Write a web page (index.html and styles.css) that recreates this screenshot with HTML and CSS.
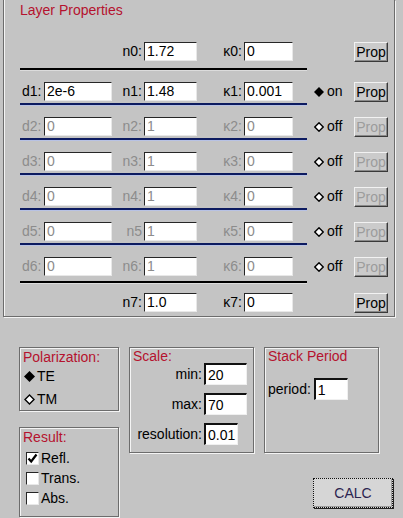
FILE: index.html
```html
<!DOCTYPE html>
<html>
<head>
<meta charset="utf-8">
<title>Layer Properties</title>
<link rel="stylesheet" href="styles.css">
</head>
<body>
<div class="frame">
  <div class="ftitle">Layer Properties</div>

  <div class="row r0">
    <span class="dlab"></span><span class="dinp"></span>
    <span class="nlab">n0:</span><input class="ninp" value="1.72">
    <span class="klab">κ0:</span><input class="kinp" value="0">
    <span class="radio"></span>
    <button class="prop">Prop</button>
  </div>
  <div class="sep black s0"></div>

  <div class="row">
    <span class="dlab">d1:</span><input class="dinp" value="2e-6">
    <span class="nlab">n1:</span><input class="ninp" value="1.48">
    <span class="klab">κ1:</span><input class="kinp" value="0.001">
    <span class="radio"><svg width="10" height="10" viewBox="0 0 10 10"><polygon points="5,0 10,5 5,10 0,5" fill="#000"/></svg>on</span>
    <button class="prop">Prop</button>
  </div>
  <div class="sep blue"></div>

  <div class="row dis">
    <span class="dlab">d2:</span><input class="dinp" value="0">
    <span class="nlab">n2:</span><input class="ninp" value="1">
    <span class="klab">κ2:</span><input class="kinp" value="0">
    <span class="radio"><svg width="10" height="10" viewBox="0 0 10 10"><polygon points="5,0.8 9.2,5 5,9.2 0.8,5" fill="#fff" stroke="#000" stroke-width="1.4"/></svg>off</span>
    <button class="prop">Prop</button>
  </div>
  <div class="sep blue"></div>

  <div class="row dis">
    <span class="dlab">d3:</span><input class="dinp" value="0">
    <span class="nlab">n3:</span><input class="ninp" value="1">
    <span class="klab">κ3:</span><input class="kinp" value="0">
    <span class="radio"><svg width="10" height="10" viewBox="0 0 10 10"><polygon points="5,0.8 9.2,5 5,9.2 0.8,5" fill="#fff" stroke="#000" stroke-width="1.4"/></svg>off</span>
    <button class="prop">Prop</button>
  </div>
  <div class="sep blue"></div>

  <div class="row dis">
    <span class="dlab">d4:</span><input class="dinp" value="0">
    <span class="nlab">n4:</span><input class="ninp" value="1">
    <span class="klab">κ4:</span><input class="kinp" value="0">
    <span class="radio"><svg width="10" height="10" viewBox="0 0 10 10"><polygon points="5,0.8 9.2,5 5,9.2 0.8,5" fill="#fff" stroke="#000" stroke-width="1.4"/></svg>off</span>
    <button class="prop">Prop</button>
  </div>
  <div class="sep blue"></div>

  <div class="row dis">
    <span class="dlab">d5:</span><input class="dinp" value="0">
    <span class="nlab">n5</span><input class="ninp" value="1">
    <span class="klab">κ5:</span><input class="kinp" value="0">
    <span class="radio"><svg width="10" height="10" viewBox="0 0 10 10"><polygon points="5,0.8 9.2,5 5,9.2 0.8,5" fill="#fff" stroke="#000" stroke-width="1.4"/></svg>off</span>
    <button class="prop">Prop</button>
  </div>
  <div class="sep blue"></div>

  <div class="row dis">
    <span class="dlab">d6:</span><input class="dinp" value="0">
    <span class="nlab">n6:</span><input class="ninp" value="1">
    <span class="klab">κ6:</span><input class="kinp" value="0">
    <span class="radio"><svg width="10" height="10" viewBox="0 0 10 10"><polygon points="5,0.8 9.2,5 5,9.2 0.8,5" fill="#fff" stroke="#000" stroke-width="1.4"/></svg>off</span>
    <button class="prop">Prop</button>
  </div>
  <div class="sep black s6"></div>

  <div class="row">
    <span class="dlab"></span><span class="dinp"></span>
    <span class="nlab">n7:</span><input class="ninp" value="1.0">
    <span class="klab">κ7:</span><input class="kinp" value="0">
    <span class="radio"></span>
    <button class="prop">Prop</button>
  </div>
</div>

<div class="bottom">
  <div class="col">
    <div class="box pol">
      <div class="title">Polarization:</div>
      <div class="opt o1"><svg width="11" height="11" viewBox="0 0 11 11"><polygon points="5.5,0 11,5.5 5.5,11 0,5.5" fill="#000"/></svg>TE</div>
      <div class="opt o2"><svg width="11" height="11" viewBox="0 0 11 11"><polygon points="5.5,1 10,5.5 5.5,10 1,5.5" fill="#fff" stroke="#000" stroke-width="1.4"/></svg>TM</div>
    </div>
    <div class="box res">
      <div class="title">Result:</div>
      <div class="chk c1"><span class="cb"><svg width="11" height="11" viewBox="0 0 11 11"><path d="M1.5 5.5 L4.2 8.5 L9.5 1.5" fill="none" stroke="#000" stroke-width="2.2"/></svg></span>Refl.</div>
      <div class="chk"><span class="cb"></span>Trans.</div>
      <div class="chk"><span class="cb"></span>Abs.</div>
    </div>
  </div>

  <div class="box scale">
    <div class="title tight">Scale:</div>
    <div class="sgrid">
      <span class="slab">min:</span><input class="big w43" value="20">
      <span class="slab">max:</span><input class="big w43" value="70">
      <span class="slab">resolution:</span><input class="big w34" value="0.01">
    </div>
  </div>

  <div class="rcol">
    <div class="box stack">
      <div class="title tight">Stack Period</div>
      <div class="prow"><span>period:</span><input class="big w34" value="1"></div>
    </div>
    <button class="calc">CALC</button>
  </div>
</div>
</body>
</html>
```

FILE: styles.css
```css
* { box-sizing: border-box; }

body {
  margin: 0;
  width: 403px;
  height: 518px;
  overflow: hidden;
  background: #c4c4c4;
  font: 14px "Liberation Sans", Arial, sans-serif;
  color: #000;
}

.frame {
  margin-left: 3px;
  width: 392px;
  height: 317px;
  border: 1px solid #6c6c6c;
  border-top: 0;
  box-shadow: 1px 1px 0 #f4f4f4, inset 1px 0 0 #f4f4f4;
  padding: 2px 0 0 16px;
}

.ftitle {
  color: #b5122e;
  line-height: 17px;
  height: 17px;
  margin-bottom: 23px;
}

.row {
  display: flex;
  align-items: flex-start;
  height: 20px;
  line-height: 19px;
}

.dlab { width: 24px; padding-left: 2px; }
.dinp { width: 68px; }
.nlab { width: 32px; text-align: right; padding-right: 2px; }
.ninp { width: 53px; }
.klab { width: 47px; text-align: right; padding-right: 2px; }
.kinp { width: 49px; }

.radio {
  width: 61px;
  height: 19px;
  padding-left: 21px;
  display: flex;
  align-items: center;
  gap: 3px;
  color: #000;
}

input {
  height: 19px;
  margin: 0;
  padding: 0 0 0 2px;
  border: 1px solid;
  border-color: #262626 #e8e8e8 #e8e8e8 #262626;
  background: #fff;
  font: inherit;
  color: #000;
  outline: none;
}

.prop {
  width: 34px;
  height: 20px;
  margin: 0;
  padding: 0;
  font: inherit;
  color: #000;
  background: #cbcbcb;
  border: 1px solid;
  border-color: #f2f2f2 #3a3a3a #3a3a3a #f2f2f2;
  box-shadow: inset -1px -1px 0 #8a8a8a;
}

.dis .dlab, .dis .nlab, .dis .klab, .dis input, .dis .prop { color: #8c8c8c; }
.dis .prop { color: #9c9c9c; }

.sep {
  width: 287px;
  height: 3px;
  border-top: 2px solid #000;
  border-bottom: 1px solid #dcdcdc;
  margin: 1px 0 11px;
}
.sep.blue { border-top-color: #0d1b60; border-bottom-color: #b8c2e4; }
.sep.s0 { margin: 6px 0 11px; }
.sep.s6 { margin: 4px 0 9px; }

/* bottom section */
.bottom {
  display: flex;
  align-items: flex-start;
  gap: 10px;
  margin-top: 30px;
  padding-left: 19px;
}

.col, .rcol { display: flex; flex-direction: column; align-items: flex-start; }

.box {
  border: 1px solid #6c6c6c;
  box-shadow: 1px 1px 0 #f4f4f4, inset 1px 1px 0 #f4f4f4;
  padding: 1px 0 0 3px;
}

.title { color: #b5122e; line-height: 16px; }
.title.tight { line-height: 14px; }

.pol { width: 100px; height: 64px; }
.res { width: 100px; height: 90px; margin-top: 16px; }
.scale { width: 125px; height: 106px; }
.stack { width: 115px; height: 106px; }

.opt {
  display: flex;
  align-items: center;
  gap: 2px;
  height: 16px;
  line-height: 16px;
  padding-left: 1px;
}
.opt.o1 { margin-top: 3px; }
.opt.o2 { margin-top: 7px; }

.chk {
  display: flex;
  align-items: center;
  gap: 2px;
  height: 16px;
  line-height: 16px;
  margin-top: 4px;
  padding-left: 3px;
}
.chk.c1 { margin-top: 5px; }

.cb {
  width: 13px;
  height: 13px;
  background: #fff;
  border: 1px solid;
  border-color: #262626 #e8e8e8 #e8e8e8 #262626;
  display: flex;
  align-items: center;
  justify-content: center;
}

.sgrid {
  display: grid;
  grid-template-columns: 70px auto;
  grid-auto-rows: 22px;
  column-gap: 1px;
  row-gap: 8px;
  justify-items: start;
}
.slab { justify-self: end; line-height: 22px; padding-right: 1px; }

input.big {
  height: 22px;
  border-width: 2px 1px 1px 2px;
  border-color: #111 #f0f0f0 #f0f0f0 #111;
}
.w43 { width: 43px; }
.w34 { width: 34px; }

.prow {
  display: flex;
  align-items: center;
  gap: 3px;
  margin-top: 15px;
  line-height: 22px;
}

.calc {
  margin: 25px 0 0 49px;
  width: 80px;
  height: 30px;
  padding: 0;
  font: inherit;
  color: #2b2450;
  background: #d6d6d6;
  border: 1px dotted #111;
  box-shadow: 1px 1px 0 #222, inset -1px -1px 0 #9a9a9a;
}
```
